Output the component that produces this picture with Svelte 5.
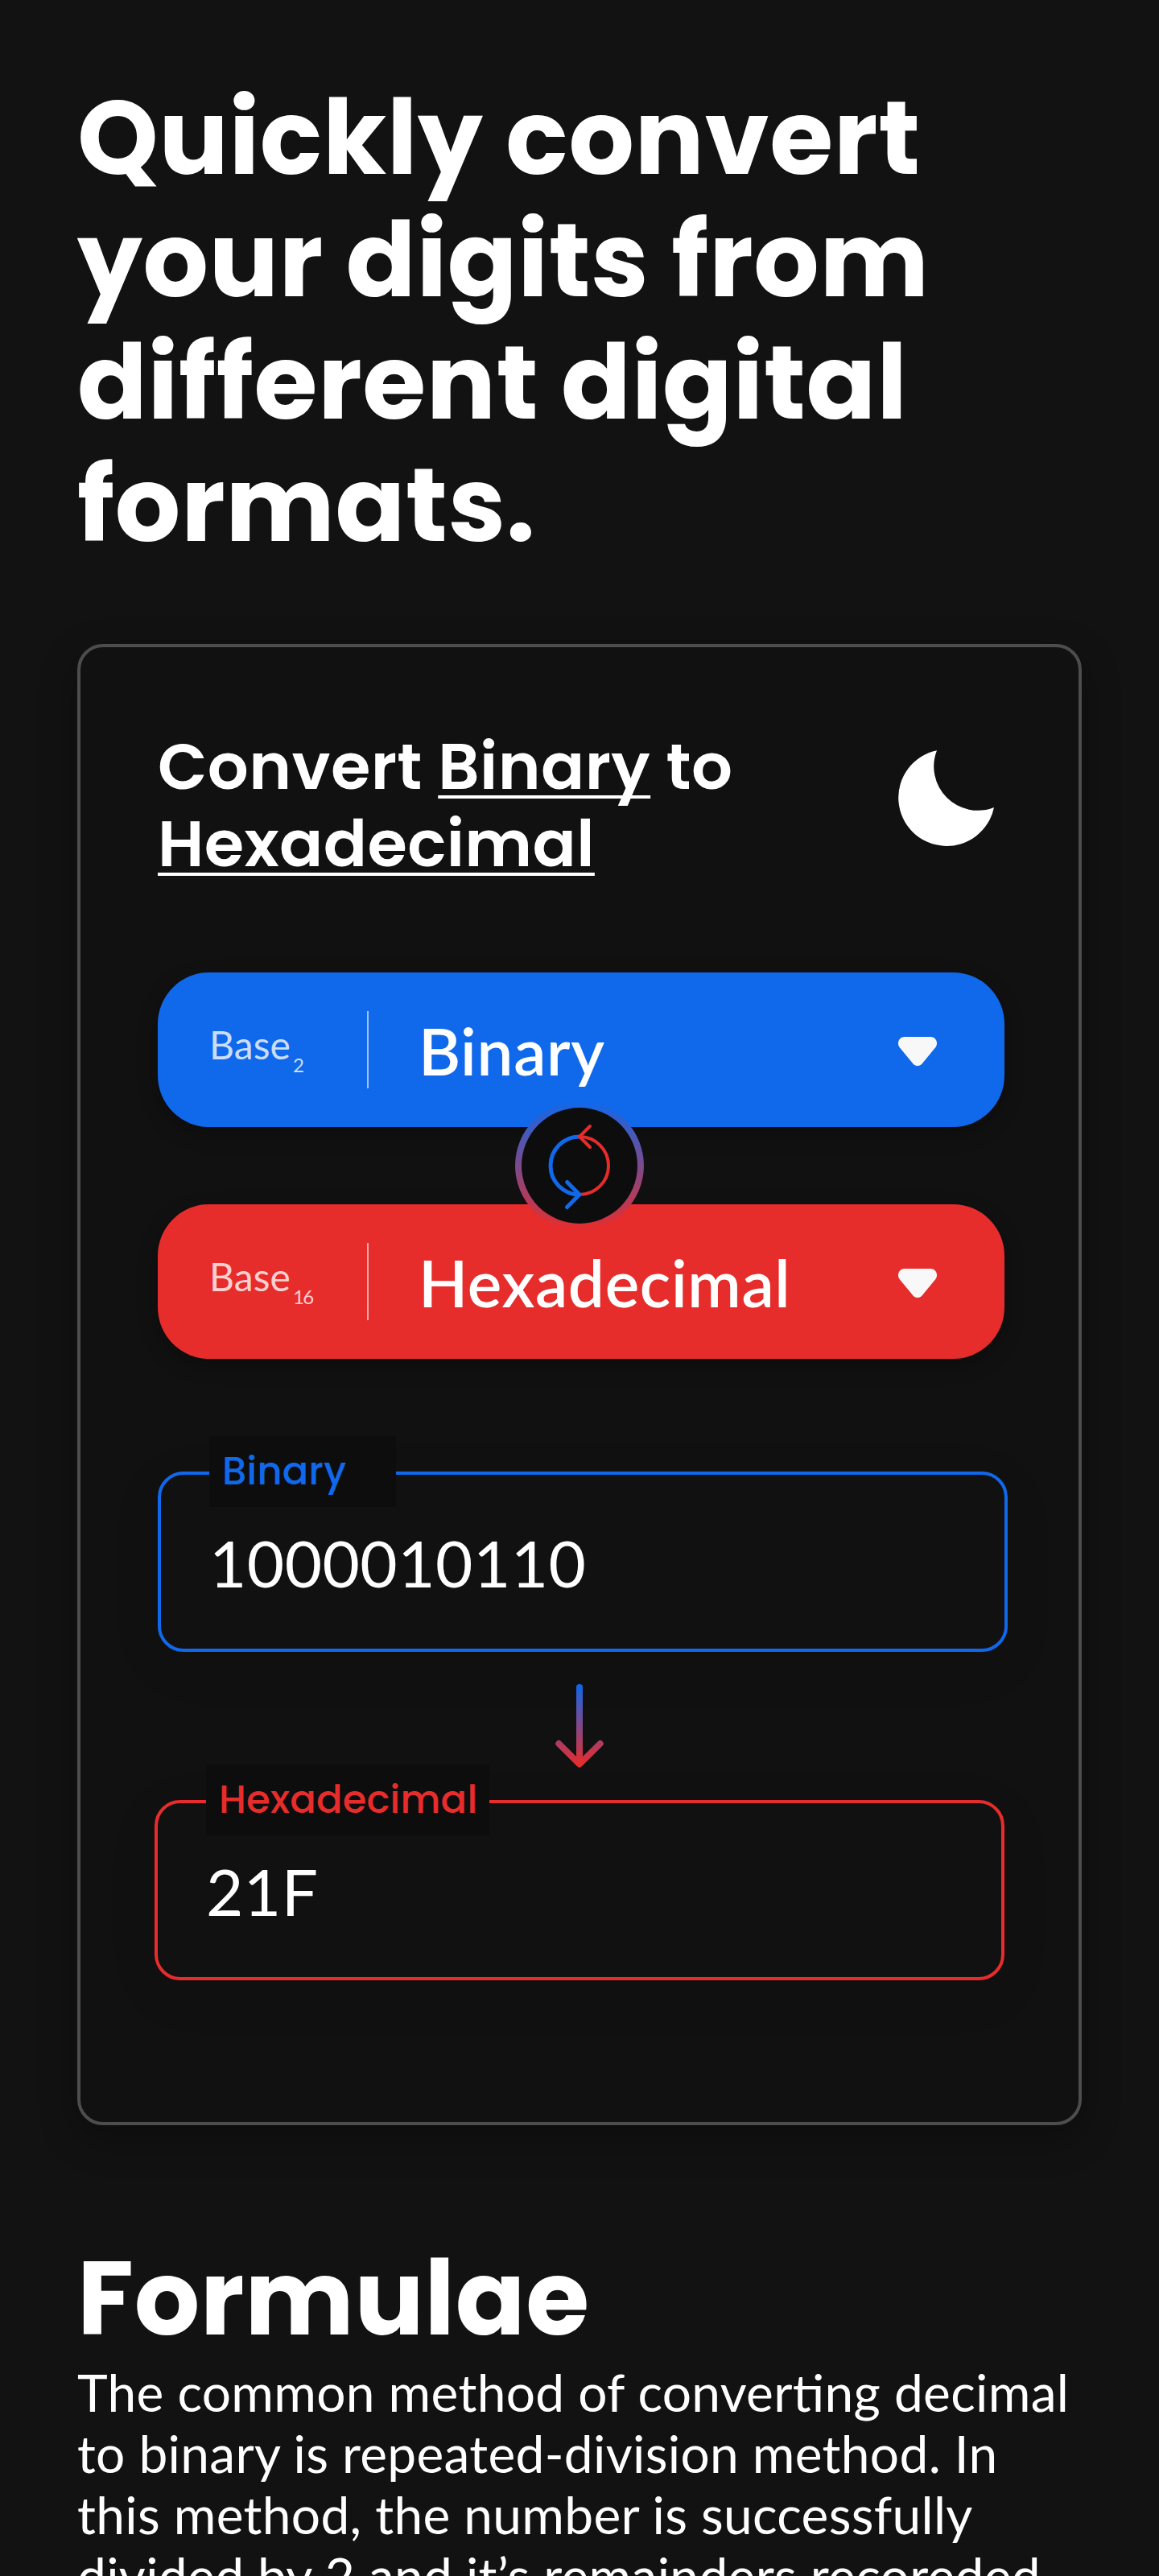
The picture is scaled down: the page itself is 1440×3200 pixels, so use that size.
<script>
  const bases = [
    { tone: 'blue', radix: 2, name: 'Binary' },
    { tone: 'red', radix: 16, name: 'Hexadecimal' }
  ];
</script>

<main>
  <h1>Quickly convert<br />your digits from<br />different digital<br />formats.</h1>

  <section class="card">
    <header>
      <h2>Convert <u>Binary</u> to<br /><u>Hexadecimal</u></h2>
      <svg class="moon" viewBox="0 0 120 120" aria-hidden="true">
        <path d="M48 1.200A60 60 0 1 0 119 72A54.700 54.700 0 0 1 48 1.200Z" />
      </svg>
    </header>

    <div class="selects">
      {#each bases as base}
        <button class="select {base.tone}">
          <span class="base">Base<sub>{base.radix}</sub></span>
          <span class="name">{base.name}</span>
          <svg class="caret" viewBox="0 0 48 36" aria-hidden="true">
            <path d="M8 0H40C44.500 0 48 3.500 48 8C48 10 47.400 11.700 46.200 13.200L29.500 33.400C26.600 36.900 21.400 36.900 18.500 33.400L1.800 13.200C.6 11.700 0 10 0 8C0 3.500 3.500 0 8 0Z" />
          </svg>
        </button>
      {/each}
      <span class="swap">
        <svg viewBox="0 0 144 144" aria-hidden="true">
          <path class="r" d="M72 36A36 36 0 0 1 72 108" />
          <path class="b" d="M72 36A36 36 0 0 0 72 108M56.700 92.500L72 108L56.500 123.500" />
          <path class="r" d="M85 23L72 36L85 49" />
        </svg>
      </span>
    </div>

    <div class="field blue-line">
      <label for="from">Binary</label>
      <output id="from">1000010110</output>
    </div>
    <svg class="arrow" viewBox="0 0 64 104" aria-hidden="true">
      <defs>
        <linearGradient id="flow" gradientUnits="userSpaceOnUse" x1="0" y1="0" x2="0" y2="100">
          <stop offset="0" stop-color="#1068eb" />
          <stop offset="1" stop-color="#e72c2c" />
        </linearGradient>
      </defs>
      <path d="M32 4V98M6.300 74L32 99.500L57.700 74" />
    </svg>
    <div class="field red-line">
      <label for="to">Hexadecimal</label>
      <output id="to">21F</output>
    </div>
  </section>

  <h1 class="formulae">Formulae</h1>
  <p>
    The common method of converting decimal<br />to binary is repeated-division method. In<br />this
    method, the number is successfully<br />divided by 2 and it’s remainders recoreded
  </p>
</main>

<style>
  :global(body) {
    background: #121212;
  }
  main {
    box-sizing: border-box;
    width: 1440px;
    height: 3200px;
    padding: 96px 96px 0;
    overflow: hidden;
    background: #121212;
    color: #fff;
    font-family: Lato, sans-serif;
  }
  h1,
  h2,
  p {
    margin: 0;
    white-space: nowrap;
  }
  h1 {
    font: 700 128px/152px Poppins, sans-serif;
    letter-spacing: 0.005em;
  }
  .card {
    display: flex;
    flex-direction: column;
    box-sizing: border-box;
    width: 1248px;
    height: 1840px;
    margin-top: 96px;
    padding: 100px 92px 0 96px;
    border: 4px solid #4d4d4d;
    border-radius: 32px;
    background: #111;
    box-shadow: 0 16px 48px rgba(0, 0, 0, 0.32);
  }
  header {
    display: flex;
    align-items: flex-start;
    justify-content: space-between;
    width: 1040px;
    height: 192px;
  }
  h2 {
    font: 600 80px/96px Poppins, sans-serif;
    letter-spacing: 0.005em;
  }
  u {
    text-decoration: underline 4px;
    text-decoration-skip-ink: none;
    text-underline-offset: 8px;
  }
  .moon {
    width: 120px;
    height: 120px;
    margin-top: 27px;
    fill: #fff;
  }
  .selects {
    position: relative;
    display: flex;
    flex-direction: column;
    gap: 96px;
    width: 1052px;
    margin-top: 112px;
  }
  .select {
    display: flex;
    align-items: center;
    height: 192px;
    padding: 0 84px 0 64px;
    border: 0;
    border-radius: 64px;
    color: #fff;
    font-family: Lato, sans-serif;
    letter-spacing: 0.005em;
    text-align: left;
    box-shadow: 0 8px 24px rgba(0, 0, 0, 0.3);
  }
  .blue {
    background: #1068eb;
  }
  .red {
    background: #e72c2c;
  }
  .base {
    box-sizing: border-box;
    width: 198px;
    height: 96px;
    border-right: 2px solid rgba(255, 255, 255, 0.6);
    color: rgba(255, 255, 255, 0.8);
    font-size: 48px;
    line-height: 84px;
  }
  sub {
    margin-left: 3px;
    font-size: 24px;
    letter-spacing: -1.5px;
    line-height: 0;
    vertical-align: -16px;
  }
  .name {
    margin-left: 62px;
    padding-top: 2px;
    font-size: 80px;
    font-weight: 600;
    line-height: 96px;
    letter-spacing: 0.0085em;
  }
  .caret {
    width: 48px;
    height: 36px;
    margin: 4px 0 0 auto;
    fill: #f8f8f8;
  }
  .swap {
    position: absolute;
    top: 160px;
    left: 444px;
    box-sizing: border-box;
    width: 160px;
    height: 160px;
    padding: 8px;
    border-radius: 50%;
    background: linear-gradient(#1068eb, #e72c2c);
  }
  .swap svg {
    display: block;
    border-radius: 50%;
    background: #0d0d0d;
    fill: none;
    stroke-linecap: round;
  }
  .swap .r {
    stroke: #e72c2c;
    stroke-width: 4;
  }
  .swap .b {
    stroke: #1068eb;
    stroke-width: 5;
  }
  .field {
    position: relative;
    box-sizing: border-box;
    flex: none;
    width: 1056px;
    height: 224px;
    padding: 61px 60px;
    border: 4px solid;
    border-radius: 32px;
    box-shadow: 0 16px 64px rgba(0, 0, 0, 0.08);
  }
  .blue-line {
    margin-top: 140px;
    border-color: #1068eb;
  }
  .red-line {
    margin: 40px 0 0 -4px;
    border-color: #e72c2c;
  }
  label {
    position: absolute;
    top: -48px;
    left: 60px;
    box-sizing: border-box;
    width: 232px;
    height: 88px;
    padding-left: 16px;
    background: #0d0d0d;
    color: #1068eb;
    font: 500 48px/87px Poppins, sans-serif;
    letter-spacing: 0.005em;
  }
  .red-line label {
    width: 352px;
    color: #e72c2c;
  }
  output {
    display: block;
    font-size: 80px;
    line-height: 96px;
    letter-spacing: 0.0055em;
  }
  .arrow {
    flex: none;
    width: 64px;
    height: 104px;
    margin: 40px 0 0 492px;
    fill: none;
    stroke: url(#flow);
    stroke-width: 8;
    stroke-linecap: round;
    stroke-linejoin: round;
  }
  .formulae {
    margin-top: 140px;
  }
  p {
    padding-top: 2px;
    font-size: 64px;
    line-height: 76px;
    letter-spacing: 0.005em;
    font-feature-settings: 'liga' 1;
  }
</style>
